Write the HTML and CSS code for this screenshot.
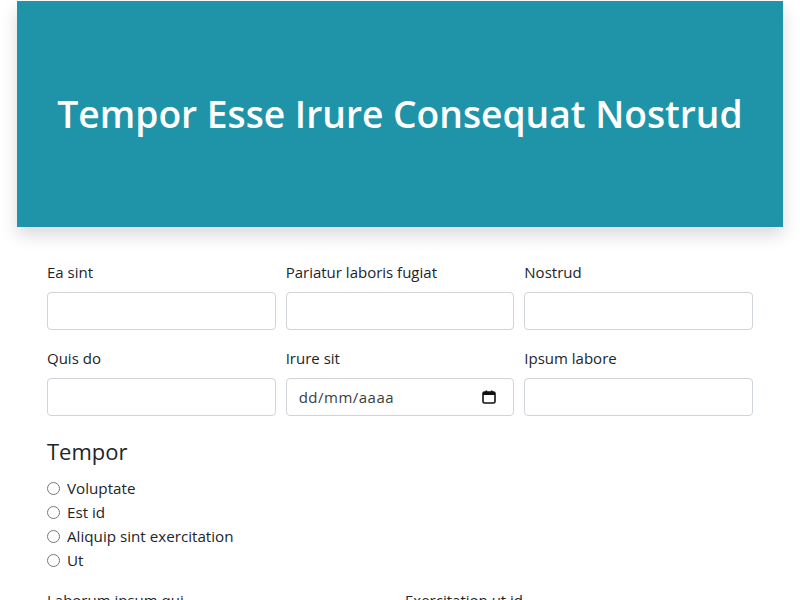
FILE: index.html
```html
<!DOCTYPE html>
<html>
<head>
<meta charset="utf-8">
<link rel="stylesheet" href="styles.css">
</head>
<body>
<header class="hero">
  <h1 class="hero-title">Tempor Esse Irure Consequat Nostrud</h1>
</header>
<main class="content">
  <div class="grid3">
    <div class="field"><label class="lbl">Ea sint</label><input class="inp" type="text"></div>
    <div class="field"><label class="lbl">Pariatur laboris fugiat</label><input class="inp" type="text"></div>
    <div class="field"><label class="lbl">Nostrud</label><input class="inp" type="text"></div>
    <div class="field"><label class="lbl">Quis do</label><input class="inp" type="text"></div>
    <div class="field"><label class="lbl">Irure sit</label>
      <div class="inp date">
        <input class="date-text" type="text" placeholder="dd/mm/aaaa">
        <svg class="cal" width="16" height="16" viewBox="0 0 16 16"><rect x="2" y="3" width="12" height="11" rx="1.5" fill="none" stroke="#111" stroke-width="1.6"/><rect x="2" y="3" width="12" height="3" fill="#111"/><rect x="4.5" y="1.5" width="1.6" height="3" fill="#111"/><rect x="9.9" y="1.5" width="1.6" height="3" fill="#111"/></svg>
      </div>
    </div>
    <div class="field"><label class="lbl">Ipsum labore</label><input class="inp" type="text"></div>
  </div>
  <h2 class="group-title">Tempor</h2>
  <div class="radios">
    <label class="radio"><input type="radio" name="t"> Voluptate</label>
    <label class="radio"><input type="radio" name="t"> Est id</label>
    <label class="radio"><input type="radio" name="t"> Aliquip sint exercitation</label>
    <label class="radio"><input type="radio" name="t"> Ut</label>
  </div>
  <div class="grid2">
    <div class="field"><label class="lbl">Laborum ipsum qui</label><input class="inp" type="text"></div>
    <div class="field"><label class="lbl">Exercitation ut id</label><input class="inp" type="text"></div>
  </div>
</main>
</body>
</html>
```

FILE: styles.css
```css
* { box-sizing: border-box; }
html, body { margin: 0; padding: 0; background: #fff; }
body {
  font-family: "Open Sans", "Noto Sans", sans-serif;
  font-size: 15px;
  line-height: 24px;
  color: #212529;
  padding: 1px 17px 0;
}
.hero {
  background: #1f94a9;
  height: 226px;
  display: flex;
  align-items: center;
  justify-content: center;
  box-shadow: 0 8px 16px rgba(0,0,0,0.15);
}
.hero-title {
  margin: 0;
  color: #fff;
  font-weight: 600;
  font-size: 37.2px;
  line-height: 1.2;
}
.content {
  padding: 33px 30px 0;
}
.grid3 {
  display: grid;
  grid-template-columns: repeat(3, 1fr);
  column-gap: 10px;
  row-gap: 16px;
}
.grid2 {
  display: grid;
  grid-template-columns: repeat(2, 1fr);
  column-gap: 10px;
  margin-top: 16px;
}
.field { display: flex; flex-direction: column; }
.lbl { display: block; margin-bottom: 8px; line-height: 24px; }
.inp {
  height: 38px;
  border: 1px solid #ced4da;
  border-radius: 4px;
  padding: 6px 12px;
  font: inherit;
  color: #212529;
  background: #fff;
}
.date {
  display: flex;
  align-items: center;
  justify-content: space-between;
  padding-right: 16px;
}
.date-text {
  border: 0;
  outline: 0;
  padding: 0;
  font: inherit;
  letter-spacing: 0.5px;
  width: 130px;
  background: transparent;
}
.date-text::placeholder { color: #3a3d40; opacity: 1; }
.cal { flex: none; }
.group-title {
  font-size: 22px;
  font-weight: 400;
  margin: 22px 0 12px;
  line-height: 1.2;
}
.radios { display: flex; flex-direction: column; }
.radio { display: flex; align-items: center; gap: 7px; line-height: 24px; font-size: 15.2px; }
.radio input { margin: 0; width: 13px; height: 13px; }
```
